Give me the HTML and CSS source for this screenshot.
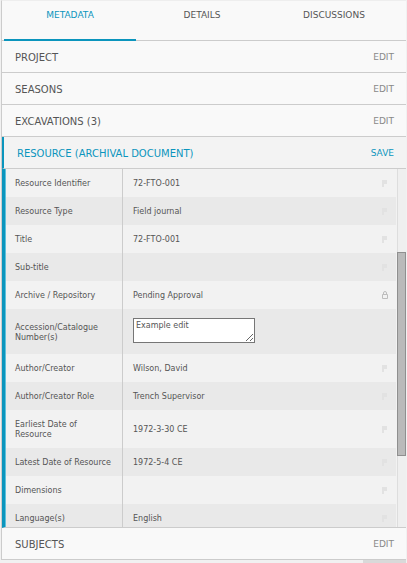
FILE: index.html
```html
<!DOCTYPE html>
<html lang="en">
<head>
    <meta charset="UTF-8">
    <title>Resource metadata</title>
    <link rel="stylesheet" href="styles.css">
</head>
<body>

    <div class="panel">
        <div class="tabs">
            <div class="tab active">METADATA</div>
            <div class="tab">DETAILS</div>
            <div class="tab">DISCUSSIONS</div>
        </div>

        <div class="section"><span>PROJECT</span><span class="action">EDIT</span></div>
        <div class="section"><span>SEASONS</span><span class="action">EDIT</span></div>
        <div class="section"><span>EXCAVATIONS (3)</span><span class="action">EDIT</span></div>
        <div class="section open"><span>RESOURCE (ARCHIVAL DOCUMENT)</span><span class="action">SAVE</span></div>

        <div class="scroll-area">
            <div class="rows">
                <div class="row"><div class="label">Resource Identifier</div><div class="value">72-FTO-001</div><div class="icon"><svg width="5" height="7" viewBox="0 0 5 7"><path d="M0 0h5v4H2v3H0z"/></svg></div></div>
                <div class="row"><div class="label">Resource Type</div><div class="value">Field journal</div><div class="icon"><svg width="5" height="7" viewBox="0 0 5 7"><path d="M0 0h5v4H2v3H0z"/></svg></div></div>
                <div class="row"><div class="label">Title</div><div class="value">72-FTO-001</div><div class="icon"><svg width="5" height="7" viewBox="0 0 5 7"><path d="M0 0h5v4H2v3H0z"/></svg></div></div>
                <div class="row"><div class="label">Sub-title</div><div class="value"></div><div class="icon"><svg width="5" height="7" viewBox="0 0 5 7"><path d="M0 0h5v4H2v3H0z"/></svg></div></div>
                <div class="row"><div class="label">Archive / Repository</div><div class="value">Pending Approval</div><div class="icon"><svg class="lock" width="6" height="8" viewBox="0 0 6 8"><path d="M1.500 3.500V2a1.500 1.500 0 0 1 3 0v1.500M.5 3.500h5v4h-5z" fill="none" stroke="#bdbdbd"/></svg></div></div>
                <div class="row tall"><div class="label">Accession/Catalogue Number(s)</div><div class="value"><textarea class="edit-box">Example edit</textarea></div><div class="icon"></div></div>
                <div class="row"><div class="label">Author/Creator</div><div class="value">Wilson, David</div><div class="icon"><svg width="5" height="7" viewBox="0 0 5 7"><path d="M0 0h5v4H2v3H0z"/></svg></div></div>
                <div class="row"><div class="label">Author/Creator Role</div><div class="value">Trench Supervisor</div><div class="icon"><svg width="5" height="7" viewBox="0 0 5 7"><path d="M0 0h5v4H2v3H0z"/></svg></div></div>
                <div class="row tall2"><div class="label">Earliest Date of Resource</div><div class="value">1972-3-30 CE</div><div class="icon"><svg width="5" height="7" viewBox="0 0 5 7"><path d="M0 0h5v4H2v3H0z"/></svg></div></div>
                <div class="row"><div class="label">Latest Date of Resource</div><div class="value">1972-5-4 CE</div><div class="icon"><svg width="5" height="7" viewBox="0 0 5 7"><path d="M0 0h5v4H2v3H0z"/></svg></div></div>
                <div class="row"><div class="label">Dimensions</div><div class="value"></div><div class="icon"><svg width="5" height="7" viewBox="0 0 5 7"><path d="M0 0h5v4H2v3H0z"/></svg></div></div>
                <div class="row"><div class="label">Language(s)</div><div class="value">English</div><div class="icon"><svg width="5" height="7" viewBox="0 0 5 7"><path d="M0 0h5v4H2v3H0z"/></svg></div></div>
            </div>
            <div class="scrollbar"><div class="thumb"></div></div>
        </div>

        <div class="section"><span>SUBJECTS</span><span class="action">EDIT</span></div>
    </div>

    <div class="hscroll"><div class="hthumb"></div></div>

</body>
</html>
```

FILE: styles.css
```css
body {
    margin: 0;
    height: 563px;
    overflow: hidden;
    font-family: "DejaVu Sans", sans-serif;
    background-color: #f1f1f1;
    color: #555;
    display: flex;
    flex-direction: column;
}

.panel {
    height: 560px;
    flex: none;
    box-sizing: border-box;
    margin: 0 1px 0 1px;
    border-left: 1px solid #ccc;
    border-top: 1px solid #eee;
    background-color: #f9f9f9;
    display: flex;
    flex-direction: column;
}

.tabs {
    display: flex;
    height: 40px;
    flex: none;
    box-sizing: border-box;
    border-bottom: 1px solid #ccc;
    padding-left: 2px;
}

.tab {
    width: 132px;
    padding-top: 9px;
    text-align: center;
    font-size: 9px;
    color: #555;
}

.tab.active {
    color: #0b95bd;
    border-bottom: 2px solid #0b95bd;
    margin-bottom: -1px;
}

.section {
    height: 32px;
    flex: none;
    box-sizing: border-box;
    border-bottom: 1px solid #ccc;
    padding: 2px 12px 0 13px;
    display: flex;
    justify-content: space-between;
    align-items: center;
    font-size: 10px;
}

.action {
    font-size: 9px;
    color: #888;
    margin-top: -2px;
}

.section.open {
    background-color: #f3f3f3;
    color: #0b95bd;
    border-left: 2px solid #0b95bd;
}

.section.open .action {
    color: #0b95bd;
}

.scroll-area {
    flex: 1;
    min-height: 0;
    display: flex;
    border-left: 3px solid #0b95bd;
    border-bottom: 1px solid #ccc;
    overflow: hidden;
    background-color: #f2f2f2;
}

.rows {
    flex: 1;
    min-width: 0;
}

.row {
    display: flex;
    min-height: 28px;
    font-size: 8px;
    align-items: stretch;
}

.row:nth-child(even) {
    background-color: #e9e9e9;
}

.row.tall {
    height: 45px;
}

.row.tall2 {
    height: 38px;
}

.label {
    width: 118px;
    flex: none;
    box-sizing: border-box;
    padding: 2px 6px 0 9px;
    border-left: 1px solid #5ec1dc;
    border-right: 1px solid #ccc;
    display: flex;
    align-items: center;
    line-height: 10px;
}

.value {
    flex: 1;
    padding-left: 10px;
    display: flex;
    align-items: center;
}

.icon {
    width: 14px;
    flex: none;
    padding-left: 1px;
    display: flex;
    align-items: center;
}

.icon svg {
    fill: #e2e2e2;
}

.edit-box {
    width: 122px;
    height: 25px;
    box-sizing: border-box;
    margin: 0 0 2px 0;
    padding: 2px;
    border: 1px solid #767676;
    font: inherit;
    color: #555;
    background-color: #fff;
    border-radius: 0;
}

.scrollbar {
    width: 8px;
    flex: none;
    background-color: #efefef;
    border-left: 1px solid #ddd;
    margin-left: 1px;
    position: relative;
}

.thumb {
    position: absolute;
    left: -1px;
    right: 0;
    top: 83px;
    height: 204px;
    background-color: #bababa;
    border: 1px solid #8f8f8f;
    box-sizing: border-box;
}

.hscroll {
    height: 3px;
    flex: none;
    display: flex;
    justify-content: flex-end;
    padding-right: 1px;
}

.hthumb {
    width: 43px;
    height: 3px;
    background-color: #d9d9d9;
}
```
